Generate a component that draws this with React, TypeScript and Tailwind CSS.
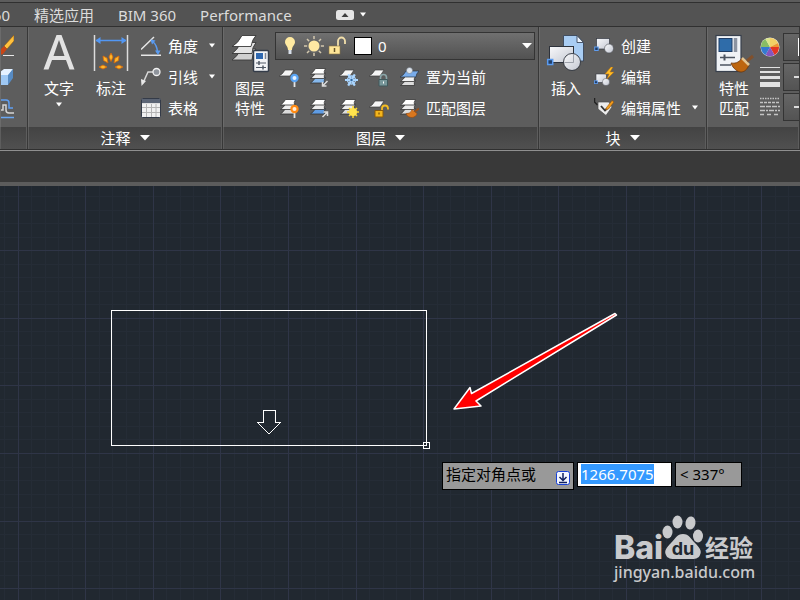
import { ReactNode, useEffect, useRef } from "react"

type IconProps = {
  children: ReactNode
  size?: "sm" | "lg"
}

const Icon = ({ children, size = "sm" }: IconProps) =>
  size === "lg" ? (
    <svg viewBox="0 0 40 40" className="w-10 h-10 shrink-0" aria-hidden="true">
      {children}
    </svg>
  ) : (
    <svg viewBox="0 0 20 20" className="w-5 h-5 shrink-0" aria-hidden="true">
      {children}
    </svg>
  )

const Caret = ({ wide = false }: { wide?: boolean }) =>
  wide ? (
    <svg viewBox="0 0 10 6" className="w-[10px] h-[6px] shrink-0" aria-hidden="true">
      <path d="M0 0h10L5 5.5z" fill="#fff" />
    </svg>
  ) : (
    <svg viewBox="0 0 8 5" className="w-2 h-[5px] shrink-0" aria-hidden="true">
      <path d="M1 0.5h6L4 4.5z" fill="#fff" />
    </svg>
  )

// One slanted sheet of a layer stack
const Sheet = ({ y, fill = "#f2f2f2" }: { y: number; fill?: string }) => (
  <path d={`M6.500 ${y}h10q-2 3 -1 5.500h-14q3 -2 5 -5.500z`} fill={fill} stroke="#333" strokeWidth="0.8" />
)

const Stack = ({ bottom = "#dcdcdc" }: { bottom?: string }) => (
  <>
    <Sheet y={10.5} fill={bottom} />
    <Sheet y={6} fill="#ececec" />
    <Sheet y={1.5} fill="#fff" />
  </>
)

const SingleSheet = () => <path d="M6 3h9l-4 6H0q4-2 6-6z" fill="#f5f5f5" stroke="#3c3c3c" strokeWidth="0.7" />

const Pin = ({ glow }: { glow: string }) => (
  <>
    <path d="M15.500 14v6" stroke="#e4e4e4" strokeWidth="1.800" />
    <circle cx="15.500" cy="11" r="4.200" fill={glow} />
    <circle cx="15.500" cy="11" r="2" fill="#fff" fillOpacity="0.85" />
  </>
)

const LayerIcon = ({ name }: { name: string }) => {
  switch (name) {
    case "off":
      return <Icon><SingleSheet /><Pin glow="#5aa5f5" /></Icon>
    case "isolate":
      return (
        <Icon>
          <Stack bottom="#86b8ec" />
          <path d="M18.500 14l-5 5m0-4v4h4" stroke="#ddd" strokeWidth="1.500" fill="none" />
        </Icon>
      )
    case "freeze":
      return (
        <Icon>
          <SingleSheet />
          <path d="M6 13h13M9.200 7.400l6.600 11.200M15.800 7.400L9.200 18.600" stroke="#a9d5ff" strokeWidth="2.200" fill="none" />
          <circle cx="12.500" cy="13" r="4" fill="none" stroke="#a9d5ff" strokeWidth="1.300" />
          <circle cx="12.500" cy="13" r="1.200" fill="#30669c" />
        </Icon>
      )
    case "lock":
      return (
        <Icon>
          <SingleSheet />
          <path d="M11.500 13v-2.500a3 3 0 0 1 6 0V13" stroke="#8ba7aa" strokeWidth="1.600" fill="none" />
          <path d="M10 12.500h8.500v6.500H10z" fill="#78979a" stroke="#40595c" />
          <path d="M14.500 14.500v2" stroke="#fff" />
        </Icon>
      )
    case "current":
      return (
        <Icon>
          <Sheet y={13} fill="#dcdcdc" />
          <Sheet y={9} />
          <path d="M7 4h13q-3 3-3 6H1q4-2 6-6z" fill="#79acea" stroke="#2a3442" strokeWidth="0.700" />
          <circle cx="10.500" cy="3.500" r="3" fill="#dfe6ee" stroke="#68717c" strokeWidth="0.500" />
        </Icon>
      )
    case "on":
      return <Icon><Stack /><Pin glow="#ff8a12" /></Icon>
    case "unisolate":
      return (
        <Icon>
          <Stack bottom="#5f9ce4" />
          <path d="M13.500 19l5-5m-4 0h4v4" stroke="#ddd" strokeWidth="1.500" fill="none" />
        </Icon>
      )
    case "thaw":
      return (
        <Icon>
          <Stack />
          <path d="M14 8v12M8 14h12M10 10l8 8M18 10l-8 8" stroke="#ffd92e" strokeWidth="1.500" />
          <circle cx="14" cy="14" r="4" fill="#ffe34d" />
        </Icon>
      )
    case "unlock":
      return (
        <Icon>
          <SingleSheet />
          <path d="M13 13v-2.500a3 3 0 0 1 6 0v1" stroke="#f5bd22" strokeWidth="1.800" fill="none" />
          <path d="M6 12.500h8v6.500H6z" fill="#f3b51d" stroke="#8d5b08" />
          <path d="M10 14.500v2" stroke="#5e3d05" />
        </Icon>
      )
    default:
      return (
        <Icon>
          <Stack />
          <path d="M13 11.500l5 4c0 2-3 4-5 4s-5-1-6-4c3 0 5-1 6-4z" fill="#d9771f" stroke="#8a430d" strokeWidth="0.500" />
          <path d="M16 13.500l4-3" stroke="#98501b" strokeWidth="2" />
        </Icon>
      )
  }
}

const AngleIcon = () => (
  <Icon>
    <path d="M0 19.200h20M0 13.500L13 1" stroke="#e6e6e6" strokeWidth="1.500" />
    <path d="M11 5c4 3 5.500 7 5.500 12" stroke="#5a9bf0" strokeWidth="1.500" fill="none" />
    <path d="M9.500 3.500l5 1-3.500 4zM14 14.500h5.500L17 19z" fill="#5a9bf0" />
  </Icon>
)

const LeaderIcon = () => (
  <Icon>
    <path d="M2 16L7 5h5" stroke="#d8d8d8" strokeWidth="1.500" fill="none" />
    <path d="M0 12l5 2-4.500 5z" fill="#e8e8e8" />
    <circle cx="15.500" cy="5" r="3.500" fill="#8f949c" stroke="#f2f2f2" strokeWidth="1.300" />
  </Icon>
)

const TableIcon = () => (
  <Icon>
    <rect x="0.500" y="0.500" width="19" height="19" rx="1" fill="#f1f1f1" stroke="#343b48" />
    <path d="M1 1h18v4H1z" fill="#5b6474" />
    <path d="M1 9.500h18M1 14.500h18M5.500 5v14M10.500 5v14M15 5v14" stroke="#b4b4b4" />
    <path d="M1 5.500h18" stroke="#dedede" />
  </Icon>
)

const BlockShape = () => (
  <>
    <rect x="2.500" y="2.500" width="13" height="10.500" fill="url(#metal)" stroke="#353a44" strokeWidth="0.700" />
    <rect x="0.700" y="11" width="3.500" height="3.500" fill="#203c64" stroke="#5f9df0" />
    <circle cx="15" cy="12.500" r="4.500" fill="url(#metal)" stroke="#4b4f56" strokeWidth="0.600" />
  </>
)

const EditAttributeIcon = () => (
  <Icon>
    <path d="M0.500 0v4l3 3" stroke="#222" strokeWidth="1.500" fill="none" />
    <path d="M4 4h11l3 5-6 8.500L4 11z" fill="#ececec" stroke="#4a4a4a" strokeWidth="0.700" />
    <path d="M7 8l4 4.500 2-2" stroke="#333" strokeWidth="1.800" fill="none" />
    <path d="M12.500 9.500l5.500-7 2 1.500-5.500 7-3 1z" fill="#f09a1c" stroke="#7f4609" strokeWidth="0.500" />
  </Icon>
)

const DimensionIcon = () => (
  <Icon size="lg">
    <path d="M3.500 1v36M36.500 1v36" stroke="#dcdcdc" strokeWidth="1.500" />
    <path d="M5 6.500h30" stroke="#5297f3" strokeWidth="1.500" />
    <path d="M4.500 6.500l5-3.500v7zM35.500 6.500l-5-3.500v7z" fill="#5297f3" />
    <g fill="#ffb62a" stroke="#d56709" strokeWidth="0.800">
      <path d="M20 19l2 4-2 4.500-2-4.500zM12 22l4 2 1 5-4.500-2.500zM28 22l-4 2-1 5 4.500-2.500zM8 33l4-2 4 2-4 2zM32 33l-4-2-4 2 4 2z" />
    </g>
  </Icon>
)

const LayerPropertiesIcon = () => (
  <Icon size="lg">
    <g stroke="#3a3a3a" strokeWidth="0.900">
      <path d="M11 15h15q-4 5-4 11H2q5-3 9-11z" fill="#d0d0d0" />
      <path d="M11 8.500h15q-4 5-4 11H2q5-3 9-11z" fill="#e4e4e4" />
      <path d="M12 1.500h14q-4 4-5 11H2q6-3 10-11z" fill="#fff" />
    </g>
    <rect x="23.500" y="16.500" width="15" height="21" rx="1" fill="#f2f4f7" stroke="#343c49" strokeWidth="1.500" />
    <rect x="26" y="19" width="7" height="6" fill="#2f68b0" />
    <path d="M35.500 19v6" stroke="#7f8795" strokeWidth="1.500" />
    <path d="M26 29h10M26 33.500h10" stroke="#505967" />
    <path d="M29 27v4M33 31.500v4" stroke="#505967" strokeWidth="1.500" />
  </Icon>
)

const InsertIcon = () => (
  <Icon size="lg">
    <path d="M17.500 1.500h13.500l6.500 7V27h-20z" fill="#a9cdf3" stroke="#3a4659" strokeWidth="0.900" />
    <path d="M31 1.500v7h6.500z" fill="#edf5ff" stroke="#3a4659" strokeWidth="0.900" />
    <rect x="3.500" y="12.500" width="24" height="16" fill="url(#metal)" stroke="#2d323b" />
    <circle cx="26" cy="28" r="8.500" fill="url(#metal)" stroke="#2d323b" strokeWidth="0.900" />
    <path d="M18.500 28.500h9v-8" stroke="#8b919a" strokeWidth="0.800" fill="none" />
    <rect x="1.700" y="25.500" width="5" height="5" fill="#223e65" stroke="#5a9bf0" strokeWidth="1.500" />
  </Icon>
)

const MatchIcon = () => (
  <Icon size="lg">
    <rect x="2" y="1.500" width="25" height="36" fill="#eff2f6" stroke="#38404d" strokeWidth="1.200" />
    <rect x="5" y="4.500" width="13" height="13" fill="#2f6ca9" stroke="#203e66" />
    <path d="M21.500 4v14" stroke="#8b93a1" strokeWidth="3.500" />
    <path d="M6 23.500h15M6 31h11" stroke="#4c5461" strokeWidth="1.500" />
    <path d="M10.500 20.500v6" stroke="#4c5461" strokeWidth="2" />
    <path d="M17 29c6 1 9-2 11-5l7 7c-2 5-5 7-8 7s-8-3-10-9z" fill="#bd650f" stroke="#6c360a" strokeWidth="0.800" />
    <path d="M28 24l7 7" stroke="#e3c592" strokeWidth="2.500" />
    <path d="M33 27l6-5" stroke="#81502c" strokeWidth="3" />
  </Icon>
)

const ColorWheelIcon = () => (
  <Icon>
    <circle cx="10" cy="10" r="9.500" fill="#eee" />
    <path d="M10 10V1a9 9 0 0 1 8 5z" fill="#f2cf64" />
    <path d="M10 10l8-4a9 9 0 0 1 1 4z" fill="#ed9632" />
    <path d="M10 10h9a9 9 0 0 1-4.500 8z" fill="#e33422" />
    <path d="M10 10l4.500 8a9 9 0 0 1-9 0z" fill="#8555be" />
    <path d="M10 10l-4.500 8A9 9 0 0 1 1 10z" fill="#357ad0" />
    <path d="M10 10H1a9 9 0 0 1 4.500-8z" fill="#89bd65" />
    <path d="M10 10L5.500 2A9 9 0 0 1 10 1z" fill="#dce58a" />
  </Icon>
)

const LineweightIcon = () => (
  <Icon>
    <path d="M0 0h20v1H0zM0 4h20v2H0zM0 9h20v3H0zM0 15h20v5H0z" fill="#e2e2e2" />
  </Icon>
)

const LinetypeIcon = () => (
  <Icon>
    <g stroke="#c4c4c4" strokeWidth="1.300">
      <path d="M0 1.500h20" strokeDasharray="1.500 1" />
      <path d="M0 5.500h20" strokeDasharray="3 1" />
      <path d="M0 9.500h20" strokeDasharray="5 1" />
      <path d="M0 13.500h20" strokeDasharray="5 1 2 1" />
      <path d="M0 17.500h20" strokeDasharray="4 3" />
    </g>
  </Icon>
)

type PanelProps = {
  title?: string
  className: string
  children: ReactNode
}

const Panel = ({ title, className, children }: PanelProps) => (
  <section className={`flex flex-col border-r border-[#383838] ${className}`}>
    <div className="flex h-[100px] pt-[3px] border-l border-[#6b6b6b] overflow-hidden">{children}</div>
    <button className="flex items-center justify-center gap-[9px] h-[22px] mx-px bg-linear-to-b from-[#434343] to-[#505050] text-[15px] leading-5">
      {title && (
        <>
          {title}
          <Caret wide />
        </>
      )}
    </button>
  </section>
)

const BigButton = ({ icon, children }: { icon: ReactNode; children: ReactNode }) => (
  <button className="flex flex-col items-center w-[52px] shrink-0 text-[15px] leading-5">
    <span className="h-11 pt-1">{icon}</span>
    {children}
  </button>
)

type SmallButtonProps = {
  icon: ReactNode
  label: string
  menu?: boolean
}

const SmallButton = ({ icon, label, menu }: SmallButtonProps) => (
  <button className="flex items-center h-[31px] text-[15px] leading-5 whitespace-nowrap">
    {icon}
    <span className="ml-[7px] mr-[10px]">{label}</span>
    {menu && <Caret />}
  </button>
)

const IconRow = ({ names, label }: { names: string[]; label: string }) => (
  <div className="flex items-center gap-[10px] h-[31px] pl-1">
    {names.slice(0, -1).map((name) => (
      <button key={name} aria-label={name}>
        <LayerIcon name={name} />
      </button>
    ))}
    <SmallButton icon={<LayerIcon name={names[names.length - 1]} />} label={label} />
  </div>
)

const LayerSelect = () => (
  <div className="flex items-center h-7 mt-[2px] mr-[3px] pl-1 pr-[2px] border border-[#343434] bg-linear-to-b from-[#707070] to-[#525252]">
    <svg viewBox="0 0 84 20" className="w-[84px] h-5 shrink-0" aria-hidden="true">
      <path d="M10 1a5 5 0 0 0-5 5c0 3 3 4 3 8h4c0-4 3-5 3-8a5 5 0 0 0-5-5z" fill="#ffeaa1" />
      <path d="M8.500 14h3v4h-3z" fill="#d9e0ea" />
      <path d="M34 0v20M24 10h20M27 3l14 14M41 3L27 17" stroke="#d3c8ae" strokeWidth="1.500" />
      <circle cx="34" cy="10" r="7" fill="#686868" />
      <circle cx="34" cy="10" r="5.500" fill="#ffe8a3" />
      <path d="M58 11V5a3.500 3.500 0 0 1 7 0v3" stroke="#f2dfaa" strokeWidth="1.800" fill="none" />
      <rect x="49" y="10" width="11" height="8" fill="#ffe698" stroke="#8a7545" strokeWidth="0.600" />
      <path d="M54.500 12v4" stroke="#665529" strokeWidth="1.500" />
    </svg>
    <span className="w-[18px] h-[18px] -ml-[10px] shrink-0 bg-white border border-black" />
    <select aria-label="图层" className="flex-1 min-w-0 pl-[6px] text-[15px] leading-5 bg-transparent appearance-none outline-none">
      <option>0</option>
    </select>
    <Caret wide />
  </div>
)

const PropertySelect = ({ label, children }: { label: string; children: ReactNode }) => (
  <button aria-label={label} className="flex items-center w-[160px] h-7 pl-[14px] border border-[#343434] bg-linear-to-b from-[#666] to-[#535353]">
    {children}
  </button>
)

const TabBar = () => (
  <nav className="flex items-center gap-6 h-[27px] pt-[3px] shrink-0 border-b border-[#303030] bg-[#535353] shadow-[inset_0_2px_#5c5c5c,inset_0_3px_#303030] text-[15px] leading-5 text-[#dcdcdc] whitespace-nowrap overflow-hidden">
    <a href="#a360" className="flex justify-end w-[10px] shrink-0">60</a>
    <a href="#featured">精选应用</a>
    <a href="#bim">BIM 360</a>
    <a href="#performance">Performance</a>
    <button aria-label="最小化" className="flex items-center gap-[5px] ml-5">
      <svg viewBox="0 0 18 10" className="w-[18px] h-[10px]" aria-hidden="true">
        <rect width="18" height="10" rx="2.500" fill="#e6e6e6" />
        <path d="M5.500 7L9 3l3.500 4z" fill="#404040" />
      </svg>
      <Caret />
    </button>
  </nav>
)

const Ribbon = () => (
  <header className="flex h-[122px] shrink-0 bg-[#5d5d5d] overflow-hidden">
    <Panel className="w-7 shrink-0">
      <svg viewBox="0 0 14 92" className="w-[14px] h-[92px] -ml-px" aria-hidden="true">
        <path d="M4 16L14 5V11L7 19z" fill="#ffc13d" stroke="#8b5513" strokeWidth="0.600" />
        <path d="M4 16l3 3-4 5-3 1v-5z" fill="#c94515" />
        <path d="M3 25.500h11" stroke="#e8e8e8" />
        <path d="M0 45h8v10H0z" fill="#9fc8f3" />
        <path d="M0 42l4-3h9l-4 6H0z" fill="#e5f1ff" />
        <path d="M8 45l5-6v9l-5 7z" fill="#578bc3" />
        <path d="M0 70h6q3 0 3 3v5h4" stroke="#5f9ff2" strokeWidth="1.500" fill="none" />
        <path d="M0 80h3v-5h3v5q0 3 3 3h5" stroke="#d5d5d5" strokeWidth="1.500" fill="none" />
        <path d="M0 87.500h14" stroke="#6ba8f4" strokeWidth="1.500" />
      </svg>
    </Panel>

    <Panel title="注释" className="w-[195px] shrink-0">
      <div className="flex pl-1">
        <BigButton
          icon={
            <svg viewBox="0 0 32 36" className="w-8 h-9" aria-hidden="true">
              <path d="M0.500 35.500L13.500 1h5l13 34.500h-5L23 26H9l-3.500 9.500zM10.500 22h11L16 6z" fill="#e2e2e2" />
            </svg>
          }
        >
          <span className="pt-1">文字</span>
          <span className="pt-1"><Caret /></span>
        </BigButton>
        <BigButton icon={<DimensionIcon />}>
          <span className="pt-1">标注</span>
        </BigButton>
      </div>
      <div className="flex flex-col pl-1">
        <SmallButton icon={<AngleIcon />} label="角度" menu />
        <SmallButton icon={<LeaderIcon />} label="引线" menu />
        <SmallButton icon={<TableIcon />} label="表格" />
      </div>
    </Panel>

    <Panel title="图层" className="w-[316px] shrink-0">
      <BigButton icon={<LayerPropertiesIcon />}>
        <span className="pt-1">图层</span>
        <span>特性</span>
      </BigButton>
      <div className="flex-1 flex flex-col -ml-px">
        <LayerSelect />
        <div className="pt-px">
          <IconRow names={["off", "isolate", "freeze", "lock", "current"]} label="置为当前" />
          <IconRow names={["on", "unisolate", "thaw", "unlock", "match"]} label="匹配图层" />
        </div>
      </div>
    </Panel>

    <Panel title="块" className="w-[168px] shrink-0">
      <BigButton icon={<InsertIcon />}>
        <span className="pt-1">插入</span>
      </BigButton>
      <div className="flex flex-col pl-[2px]">
        <SmallButton icon={<Icon><BlockShape /></Icon>} label="创建" />
        <SmallButton
          icon={
            <Icon>
              <g transform="translate(0 5) scale(0.800)"><BlockShape /></g>
              <path d="M17 0l-6 7h4l-2 5 7-7h-4l3-5z" fill="#ffbd28" stroke="#ba6d09" strokeWidth="0.500" />
            </Icon>
          }
          label="编辑"
        />
        <SmallButton icon={<EditAttributeIcon />} label="编辑属性" menu />
      </div>
    </Panel>

    <Panel className="flex-1 min-w-0">
      <BigButton icon={<MatchIcon />}>
        <span className="pt-1">特性</span>
        <span>匹配</span>
      </BigButton>
      <div className="flex flex-col gap-[10px] pt-[7px] pr-[3px] shrink-0">
        <ColorWheelIcon />
        <LineweightIcon />
        <LinetypeIcon />
      </div>
      <div className="flex flex-col gap-[2px] pt-[3px]">
        <PropertySelect label="颜色"><span className="w-[18px] h-[18px] bg-white" /></PropertySelect>
        <PropertySelect label="线宽"><span className="w-20 h-[2px] -ml-1 bg-[#ddd]" /></PropertySelect>
        <PropertySelect label="线型"><span className="w-20 h-[2px] -ml-1 bg-[#ddd]" /></PropertySelect>
      </div>
    </Panel>
  </header>
)

const STEP = 13.52
const lines = Array.from({ length: 200 }, (_, i) => i)

const Grid = () => (
  <svg className="absolute inset-0 w-full h-full" shapeRendering="crispEdges" aria-hidden="true">
    {[false, true].map((major) =>
      lines
        .filter((i) => (i % 5 === 0) === major)
        .map((i) => {
          const x = Math.floor(18 + (i - 5) * STEP)
          const y = Math.floor(64.7 + (i - 5) * STEP)
          const color = major ? "#2f3547" : "#252c36"
          return (
            <g key={i} fill={color}>
              <rect x={x} y="0" width="1" height="100%" />
              <rect x="0" y={y} width="100%" height="1" />
            </g>
          )
        })
    )}
  </svg>
)

const Drawing = () => (
  <svg className="absolute inset-0 w-full h-full" aria-hidden="true">
    <g fill="none" stroke="#fff" shapeRendering="crispEdges">
      <rect x="111.500" y="124.500" width="315" height="135" />
      <rect x="423.500" y="256.500" width="6" height="6" />
      <path d="M263.500 224.500h12v12h5l-11.500 11.500-11.500-11.500h6z" />
    </g>
    <path
      d="M454 223L470 201.500L471.500 207.500L615 127.500L616.500 129L476 215L481 220z"
      fill="#f00"
      stroke="#fff"
      strokeWidth="1.500"
      strokeLinejoin="round"
    />
  </svg>
)

const DynamicInput = () => {
  const ref = useRef<HTMLInputElement>(null)

  useEffect(() => {
    ref.current?.focus()
    ref.current?.select()
  }, [])

  return (
    <div className="absolute left-[442px] top-[276px] flex items-start gap-[3px] text-[15px] leading-5 text-black whitespace-nowrap">
      <label htmlFor="distance" className="flex w-[132px] h-7 pl-[3px] pt-px bg-[#999] border border-black">
        指定对角点或
        <svg viewBox="0 0 14 14" className="w-[14px] h-[14px] ml-5 mt-[7px]" aria-hidden="true">
          <rect x="0.500" y="0.500" width="13" height="13" rx="2" fill="#f3f6ff" stroke="#1640d8" />
          <path d="M7 2v7M3.500 6L7 9.500 10.500 6M3 11.500h8" stroke="#102060" strokeWidth="1.500" fill="none" />
        </svg>
      </label>
      <input
        id="distance"
        ref={ref}
        defaultValue="1266.7075"
        className="w-[95px] h-[25px] pl-[3px] pb-px bg-white border border-black outline-none caret-transparent selection:bg-[#3399fffe] selection:text-white"
      />
      <output className="w-[67px] h-[25px] pl-1 pt-px bg-[#999] border border-black">&lt; 337°</output>
    </div>
  )
}

const Watermark = () => (
  <div className="absolute left-[614px] top-[326px] flex flex-col text-[#c9cacc] whitespace-nowrap">
    <div className="flex items-end h-12">
      <span className="w-[51px] font-['Inter',sans-serif] font-extrabold text-[32px] leading-6">Bai</span>
      <svg viewBox="0 0 40 48" className="w-10 h-12 shrink-0 overflow-visible" aria-hidden="true">
        <g fill="#c9cacc">
          <ellipse cx="2.500" cy="20" rx="5" ry="6.500" />
          <ellipse cx="12.500" cy="10" rx="5" ry="6.500" />
          <ellipse cx="25.500" cy="11" rx="5" ry="6.500" transform="rotate(10 25.500 11)" />
          <ellipse cx="33" cy="24" rx="5" ry="6.500" />
          <path d="M18 22c6 0 8 5 12 9 5 5 7 8 5 12-2 5-8 4-17 4s-15 1-17-4c-2-4 0-7 5-12 4-4 6-9 12-9z" />
        </g>
        <text x="18" y="43" textAnchor="middle" fill="#212830" fontFamily="Inter, sans-serif" fontWeight="700" fontSize="18">
          du
        </text>
      </svg>
      <span className="font-bold text-[24px] leading-6">经验</span>
    </div>
    <span className="font-medium text-[16px] leading-6">jingyan.baidu.com</span>
  </div>
)

const App = () => (
  <div className="flex flex-col min-h-screen overflow-hidden bg-[#212830] text-white font-['Noto_Sans','Noto_Sans_CJK_SC',sans-serif]">
    <svg className="absolute w-0 h-0" aria-hidden="true">
      <defs>
        <linearGradient id="metal" x1="0" y1="0" x2="1" y2="1">
          <stop offset="0" stopColor="#f8f9fb" />
          <stop offset="1" stopColor="#c4c8d2" />
        </linearGradient>
      </defs>
    </svg>
    <TabBar />
    <Ribbon />
    <div className="h-[2px] shrink-0 border-t border-[#303030] bg-[#8f8f8f]" />
    <div className="h-[35px] shrink-0 bg-[#393939] border-b-4 border-[#5c5c5c]" />
    <main className="relative flex-1 overflow-hidden bg-[#212830]">
      <Grid />
      <Drawing />
      <DynamicInput />
      <Watermark />
    </main>
  </div>
)

export default App
